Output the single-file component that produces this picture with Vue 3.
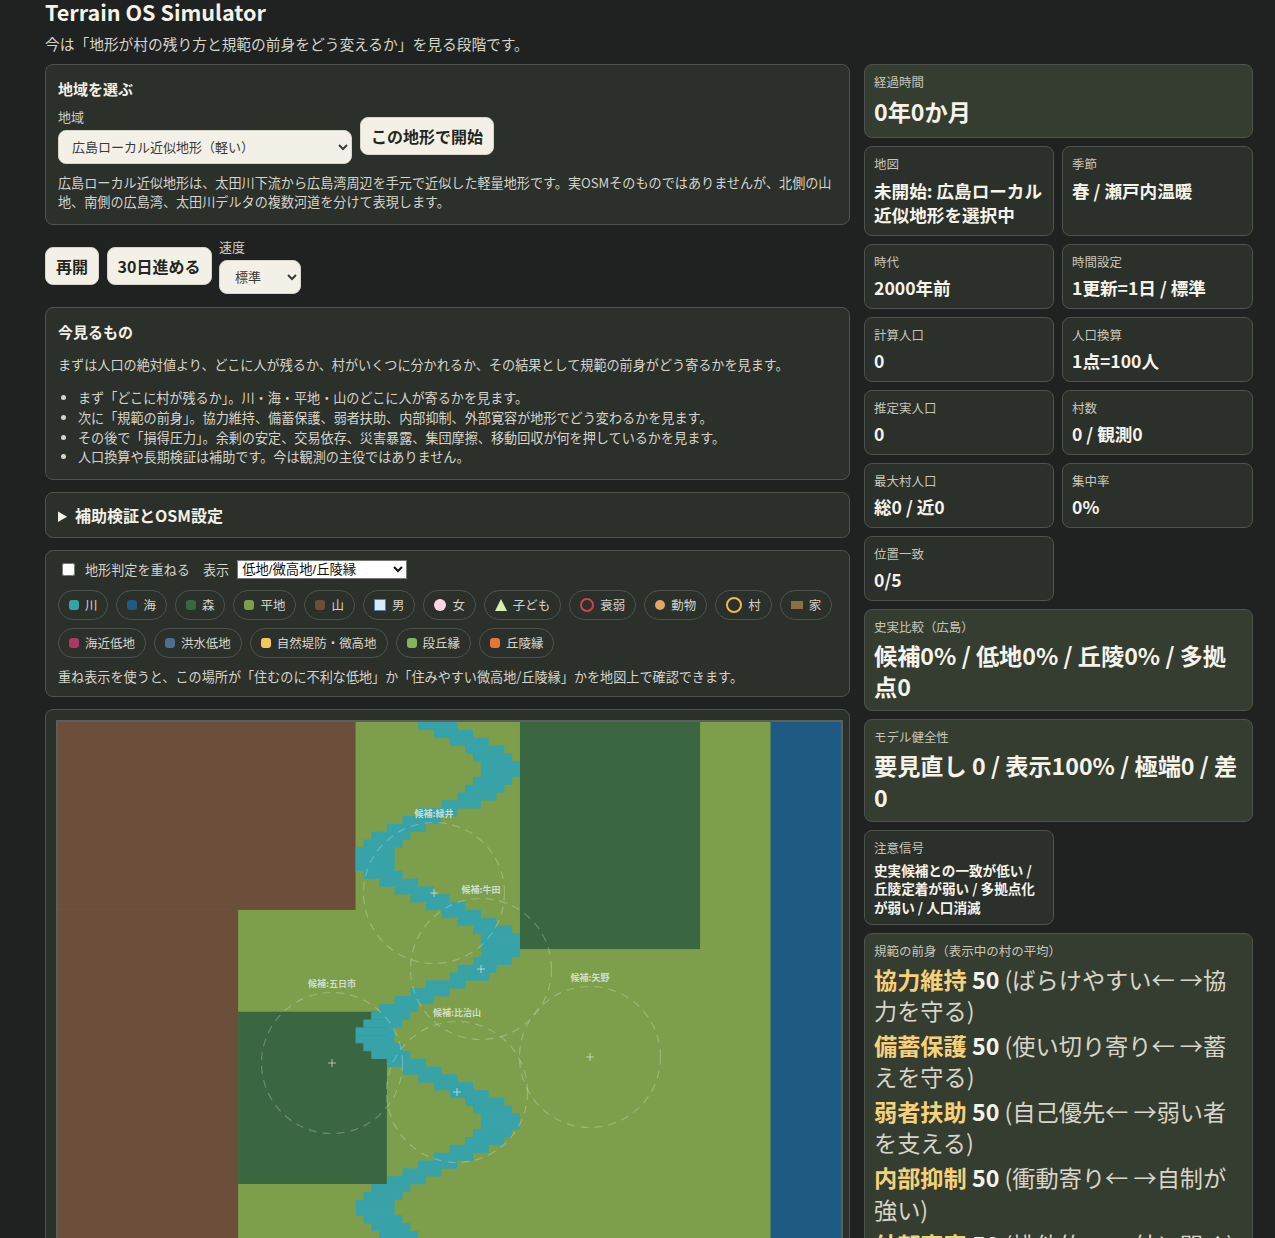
<script setup>
const riverSpans = [
  [46,51],[48,53],[50,55],[52,57],[53,58],[54,59],[54,59],[53,58],[52,57],[51,56],
  [49,54],[46,51],[44,49],[42,47],[40,45],[39,44],[38,43],[38,43],[38,43],[39,44],
  [41,46],[43,48],[45,50],[47,52],[49,54],[51,56],[53,58],[54,59],[54,59],[54,59],
  [53,58],[51,56],[50,55],[47,52],[45,50],[43,48],[41,46],[40,45],[39,44],[38,43],
  [38,43],[39,44],[40,45],[42,47],[44,49],[46,51],[48,53],[50,55],[52,57],[53,58],
  [54,59],[54,59],[53,58],[52,57],[50,55],[48,53],[46,51],[44,49],[42,47],[40,45],
  [39,44],[38,43],[38,43],[39,44],[40,45],[41,46],
]
const cell = 7.83
const river = riverSpans.map(([a, b], row) => ({
  x: a * cell, y: row * cell, w: (b - a) * cell, h: cell + 0.3,
}))
const blocks = [
  { x: 0, y: 0, w: 38, h: 24, fill: '#6b4f3a' },
  { x: 0, y: 24, w: 23, h: 76, fill: '#6b4f3a' },
  { x: 59, y: 0, w: 23, h: 29, fill: '#3a6641' },
  { x: 23, y: 37, w: 19, h: 22, fill: '#3a6641' },
  { x: 91, y: 0, w: 9, h: 100, fill: '#1f5a82' },
]
const candidates = [
  { name: '候補:緑井', x: 376, y: 171 },
  { name: '候補:牛田', x: 423, y: 247 },
  { name: '候補:五日市', x: 274, y: 341 },
  { name: '候補:矢野', x: 532, y: 335 },
  { name: '候補:比治山', x: 399, y: 370 },
]
const legendA = [
  { t: '川', k: 'dot', c: '#35a4a8' }, { t: '海', k: 'dot', c: '#1f5a82' }, { t: '森', k: 'dot', c: '#3a6641' },
  { t: '平地', k: 'dot', c: '#7d9f4c' }, { t: '山', k: 'dot', c: '#6b4f3a' }, { t: '男', k: 'square', c: '#d8ecff' },
  { t: '女', k: 'oval', c: '#ffd6e5' }, { t: '子ども', k: 'tri', c: '#d6eeb0' }, { t: '衰弱', k: 'ring', c: '#d0405a' },
  { t: '動物', k: 'round', c: '#e0a860' }, { t: '村', k: 'ring big', c: '#f0b850' }, { t: '家', k: 'house', c: '#8c6f42' },
]
const legendB = [
  { t: '海近低地', k: 'dot', c: '#a83a64' }, { t: '洪水低地', k: 'dot', c: '#4f6d8c' },
  { t: '自然堤防・微高地', k: 'dot', c: '#f2c75c' }, { t: '段丘縁', k: 'dot', c: '#86b45c' },
  { t: '丘陵縁', k: 'dot', c: '#e8743c' },
]
const stats = [
  { l: '経過時間', v: '0年0か月', cls: 'wide big tint lead-stat' },
  { l: '地図', v: '未開始: 広島ローカル近似地形を選択中', cls: '' },
  { l: '季節', v: '春 / 瀬戸内温暖', cls: '' },
  { l: '時代', v: '2000年前', cls: '' }, { l: '時間設定', v: '1更新=1日 / 標準', cls: '' },
  { l: '計算人口', v: '0', cls: '' }, { l: '人口換算', v: '1点=100人', cls: '' },
  { l: '推定実人口', v: '0', cls: '' }, { l: '村数', v: '0 / 観測0', cls: '' },
  { l: '最大村人口', v: '総0 / 近0', cls: '' }, { l: '集中率', v: '0%', cls: '' },
  { l: '位置一致', v: '0/5', cls: 'full-row' },
  { l: '史実比較（広島）', v: '候補0% / 低地0% / 丘陵0% / 多拠点0', cls: 'wide big tint' },
  { l: 'モデル健全性', v: '要見直し 0 / 表示100% / 極端0 / 差0', cls: 'wide big tint' },
  { l: '注意信号', v: '史実候補との一致が低い / 丘陵定着が弱い / 多拠点化が弱い / 人口消滅', cls: 'small full-row' },
]
const norms = [
  { n: '協力維持', v: 50, d: '(ばらけやすい← →協力を守る)' },
  { n: '備蓄保護', v: 50, d: '(使い切り寄り← →蓄えを守る)' },
  { n: '弱者扶助', v: 50, d: '(自己優先← →弱い者を支える)' },
  { n: '内部抑制', v: 50, d: '(衝動寄り← →自制が強い)' },
  { n: '外部寛容', v: 50, d: '(排他的← →外に開く)' },
]
</script>

<template>
  <div class="page">
    <h1>Terrain OS Simulator</h1>
    <p class="lead">今は「地形が村の残り方と規範の前身をどう変えるか」を見る段階です。</p>
    <div class="layout">
      <main class="left">
        <section class="card">
          <h3>地域を選ぶ</h3>
          <div class="region-row">
            <label class="field">地域
              <select class="sel region"><option>広島ローカル近似地形（軽い）</option></select>
            </label>
            <button class="btn">この地形で開始</button>
          </div>
          <p class="note">広島ローカル近似地形は、太田川下流から広島湾周辺を手元で近似した軽量地形です。実OSMそのものではありませんが、北側の山地、南側の広島湾、太田川デルタの複数河道を分けて表現します。</p>
        </section>

        <div class="controls">
          <button class="btn">再開</button>
          <button class="btn">30日進める</button>
          <label class="field">速度
            <select class="sel speed"><option>標準</option></select>
          </label>
        </div>

        <section class="card">
          <h3>今見るもの</h3>
          <p class="note first">まずは人口の絶対値より、どこに人が残るか、村がいくつに分かれるか、その結果として規範の前身がどう寄るかを見ます。</p>
          <ul>
            <li>まず「どこに村が残るか」。川・海・平地・山のどこに人が寄るかを見ます。</li>
            <li>次に「規範の前身」。協力維持、備蓄保護、弱者扶助、内部抑制、外部寛容が地形でどう変わるかを見ます。</li>
            <li>その後で「損得圧力」。余剰の安定、交易依存、災害暴露、集団摩擦、移動回収が何を押しているかを見ます。</li>
            <li>人口換算や長期検証は補助です。今は観測の主役ではありません。</li>
          </ul>
        </section>

        <details class="card fold">
          <summary>補助検証とOSM設定</summary>
        </details>

        <section class="card legend-card">
          <div class="overlay-row">
            <input type="checkbox" class="chk" />
            <span class="ov-label">地形判定を重ねる</span>
            <span class="ov-label">表示</span>
            <select class="plain-sel"><option>低地/微高地/丘陵縁</option></select>
          </div>
          <div class="chips">
            <span v-for="i in legendA" :key="i.t" class="chip">
              <i :class="['mark', i.k]" :style="{ '--c': i.c }"></i>{{ i.t }}
            </span>
          </div>
          <div class="chips">
            <span v-for="i in legendB" :key="i.t" class="chip">
              <i :class="['mark', i.k]" :style="{ '--c': i.c }"></i>{{ i.t }}
            </span>
          </div>
          <p class="note tip">重ね表示を使うと、この場所が「住むのに不利な低地」か「住みやすい微高地/丘陵縁」かを地図上で確認できます。</p>
        </section>

        <section class="card map-card">
          <svg class="map" viewBox="0 0 783 783" width="783" height="783">
            <rect x="0" y="0" width="783" height="783" fill="#7d9f4c" />
            <rect v-for="(b, i) in blocks" :key="'b' + i" :x="b.x * cell" :y="b.y * cell" :width="b.w * cell" :height="b.h * cell" :fill="b.fill" />
            <rect v-for="(r, i) in river" :key="'r' + i" :x="r.x" :y="r.y" :width="r.w" :height="r.h" fill="#37a3a8" />
            <g v-for="c in candidates" :key="c.name">
              <circle :cx="c.x" :cy="c.y" r="70.5" fill="none" stroke="#e6f0ea" stroke-opacity="0.28" stroke-width="1.2" stroke-dasharray="8 6" />
              <path :d="`M${c.x - 4} ${c.y}H${c.x + 4}M${c.x} ${c.y - 4}V${c.y + 4}`" stroke="#e6f0ea" stroke-opacity="0.65" fill="none" />
              <text :x="c.x" :y="c.y - 76" text-anchor="middle" class="map-label">{{ c.name }}</text>
            </g>
          </svg>
        </section>
      </main>

      <aside class="right">
        <div v-for="s in stats" :key="s.l" :class="['stat', s.cls]">
          <div class="s-label">{{ s.l }}</div>
          <div class="s-value">{{ s.v }}</div>
        </div>
        <div class="stat wide tint norms">
          <div class="s-label">規範の前身（表示中の村の平均）</div>
          <div class="norm-list">
            <div v-for="n in norms" :key="n.n" class="norm">
              <b class="n-name">{{ n.n }}</b> <b class="n-val">{{ n.v }}</b> <span class="n-desc">{{ n.d }}</span>
            </div>
          </div>
        </div>
      </aside>
    </div>
  </div>
</template>

<style>
html, body { margin: 0; background: #1f2220; overflow: hidden; height: 1238px; }
</style>

<style scoped>
.page {
  box-sizing: border-box;
  width: 1275px;
  height: 1238px;
  overflow: hidden;
  padding: 0 22px 0 45px;
  background: #1f2220;
  color: #f3f1e7;
  font-family: "Noto Sans CJK JP", "Noto Sans", sans-serif;
  font-size: 14px;
}
h1 { margin: -1px 0 0; font-size: 21.6px; line-height: 26px; font-weight: 700; color: #f5f3ea; }
.lead { margin: 8px 0 8.6px; font-size: 14.72px; line-height: 22px; color: #d6d4ca; }
.layout { display: grid; grid-template-columns: 805px 389px; gap: 14px; align-items: start; }
.left { display: flex; flex-direction: column; gap: 12px; min-width: 0; }
.card {
  box-sizing: border-box;
  background: #2b302b;
  border: 1px solid #4d534d;
  border-radius: 8px;
  padding: 12px;
}
h3 { margin: 0 0 7px; font-size: 15px; line-height: 24px; font-weight: 700; color: #f3f1e7; }
.region-row { display: flex; align-items: center; gap: 8px; }
.field { display: flex; flex-direction: column; align-items: flex-start; gap: 4px; font-size: 13px; line-height: 18px; color: #cfcdc3; }
.sel {
  box-sizing: border-box;
  height: 34px;
  border: 1px solid #d8d5c8;
  border-radius: 8px;
  background: #f3f1e7;
  color: #3a3a36;
  font: 13px "Noto Sans CJK JP", sans-serif;
  padding: 0 10px;
}
.region { width: 294px; padding-left: 9px; }
.speed { width: 82px; padding-left: 11px; }
.btn {
  box-sizing: border-box;
  height: 38px;
  padding: 0 10px;
  border: 1px solid #d8d5c8;
  border-radius: 8px;
  background: #f3f1e7;
  color: #232621;
  font: 700 16px "Noto Sans CJK JP", sans-serif;
  white-space: nowrap;
}
.note { margin: 9px 0 0; font-size: 13.12px; line-height: 19.68px; color: #d6d4ca; }
.note.first { margin: 11px 0 14px; }
.controls { display: flex; align-items: center; gap: 7.6px; margin: 0.6px 0 1px; }
ul { margin: 0; padding-left: 20px; font-size: 13.12px; line-height: 19.68px; color: #d6d4ca; }
.fold { padding: 12px; }
summary { font-size: 16px; line-height: 20px; font-weight: 700; color: #f3f1e7; cursor: pointer; }
.legend-card { padding-top: 8px; padding-bottom: 9px; }
.overlay-row { display: flex; align-items: center; height: 20px; font-size: 13.12px; color: #d6d4ca; }
.chk { width: 13px; height: 13px; margin: 0 10px 0 4px; }
.ov-label { margin-right: 13px; }
.plain-sel {
  box-sizing: border-box;
  width: 170px;
  height: 19px;
  margin-left: -5px;
  font: 13.33px "Liberation Sans", "Noto Sans CJK JP", sans-serif;
  background: #fff;
  color: #111;
  border: 1px solid #777;
  border-radius: 0;
  padding: 0;
}
.chips { display: flex; flex-wrap: wrap; gap: 8px; margin-top: 8px; }
.overlay-row + .chips { margin-top: 11px; }
.chip {
  display: inline-flex;
  align-items: center;
  gap: 6px;
  box-sizing: border-box;
  height: 30px;
  padding: 0 10px;
  border: 1px solid #4d534d;
  border-radius: 15px;
  font-size: 12.48px;
  color: #d6d4ca;
  white-space: nowrap;
}
.mark { display: inline-block; flex: none; width: 10px; height: 10px; background: var(--c); }
.mark.dot { border-radius: 3px; }
.mark.round { border-radius: 50%; }
.mark.square { width: 12px; height: 12px; border: 1px solid #5f7f9c; box-sizing: border-box; }
.mark.oval { border-radius: 50%; height: 12px; width: 12px; }
.mark.tri { background: none; width: 0; height: 0; border-left: 6px solid transparent; border-right: 6px solid transparent; border-bottom: 12px solid var(--c); }
.mark.ring { background: none; width: 14px; height: 14px; box-sizing: border-box; border: 2px solid var(--c); border-radius: 50%; }
.mark.ring.big { width: 16px; height: 16px; }
.mark.house { width: 12px; height: 8px; border-radius: 0; }
.tip { margin-top: 9px; }
.map-card { padding: 10px; height: 800px; }
.map { display: block; border: 2px solid #5a605a; }
.map-label { font-size: 9px; font-weight: 700; fill: #e2ece6; fill-opacity: 0.82; font-family: "Noto Sans CJK JP", sans-serif; }

.right { display: grid; grid-template-columns: 190px 191px; gap: 8px; }
.stat {
  box-sizing: border-box;
  padding: 9px 9px 7px;
  border: 1px solid #4d534d;
  border-radius: 8px;
  background: #2b302b;
}
.stat.tint { background: #353d30; }
.stat.wide { grid-column: 1 / -1; }
.stat.full-row { grid-column: 1; }
.s-label { font-size: 12.48px; line-height: 16.8px; color: #c8c6ba; }
.s-value { margin-top: 5.6px; font-size: 17.6px; line-height: 24.6px; font-weight: 700; color: #f5f3ea; }
.big .s-value { margin-top: 4.2px; font-size: 23.2px; line-height: 31.3px; }
.stat.big { padding-bottom: 7.9px; }
.stat.lead-stat { padding-bottom: 10px; }
.stat.lead-stat .s-value { margin-top: 5.6px; }
.small .s-value { margin-top: 4.4px; font-size: 13.6px; line-height: 18.4px; }
.stat.small { padding-bottom: 7.6px; }
.norm-list { margin-top: 4px; }
.norm { font-size: 23.2px; line-height: 31.3px; margin-bottom: 3.7px; color: #d8d5c8; }
.n-name { color: #f5d27a; font-weight: 700; }
.n-val { color: #f5f3ea; font-weight: 700; }
.n-desc { font-weight: 400; }
</style>
